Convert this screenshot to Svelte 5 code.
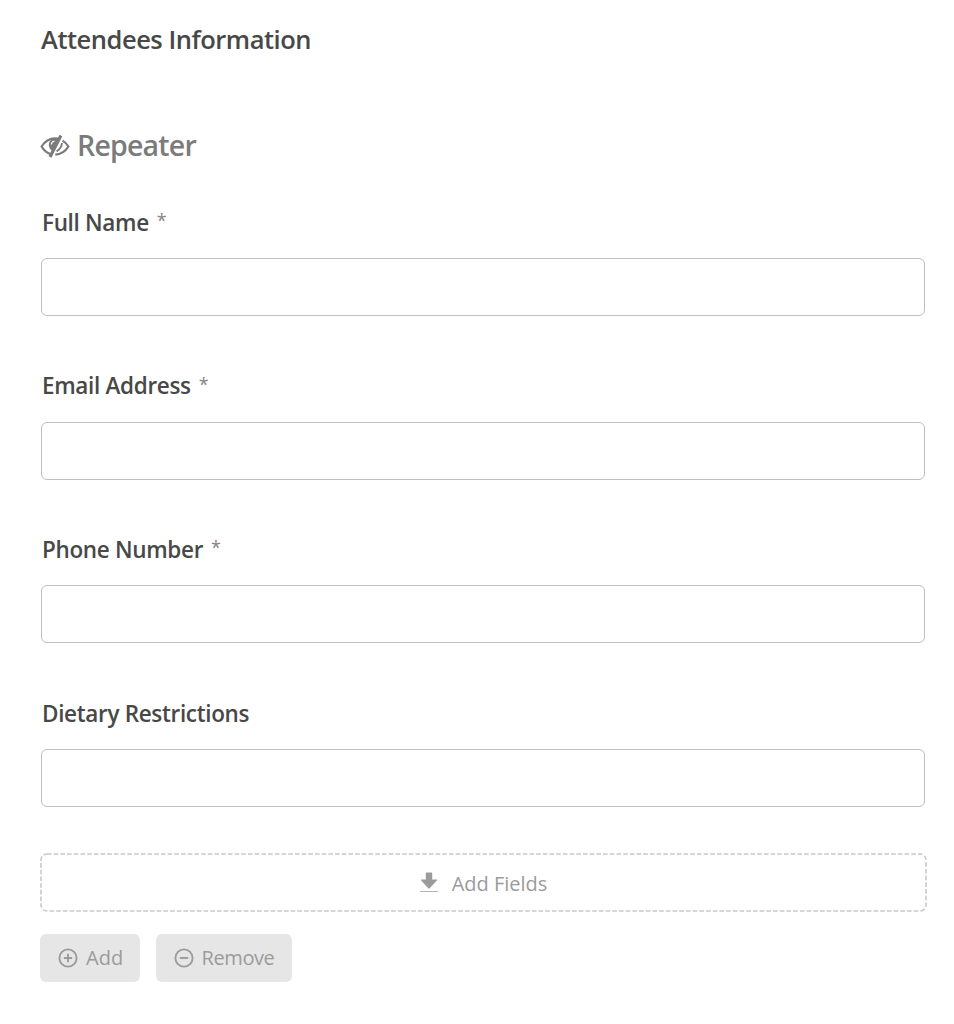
<script lang="ts">
interface Field {
	id: string;
	label: string;
	required: boolean;
}

const fields: Field[] = [
	{ id: 'full-name', label: 'Full Name', required: true },
	{ id: 'email', label: 'Email Address', required: true },
	{ id: 'phone', label: 'Phone Number', required: true },
	{ id: 'dietary', label: 'Dietary Restrictions', required: false }
];
</script>

<main class="form-preview">
	<h2 class="section-title">Attendees Information</h2>

	<!-- Repeater heading, its label is hidden on the live form -->
	<div class="repeater-title">
		<svg class="eye-icon" width="30" height="24" viewBox="0 0 30 24" fill="none" aria-hidden="true">
			<path d="M10.900 20.200C6.800 18.900 3.700 16.200 1.600 12.500 4.600 7.600 9.300 4.300 15 4.300c1.500 0 2.900.2 4.200.6" stroke="currentColor" stroke-width="2.200" />
			<path d="M15.300 20.700c5.600-.4 10.200-3.500 13.100-8.200-1.500-2.600-3.400-4.500-5.800-5.900" stroke="currentColor" stroke-width="2.200" />
			<path d="M19.500 4.600C13.100 3.200 8.800 6.400 8.800 10.800c0 2.900 1.400 5.100 3.800 6.400Z" fill="currentColor" />
			<path d="M11.300 10.500c.2-2 1.500-3.200 3.300-3.500" stroke="#fff" stroke-width="1.200" />
			<path d="M20.900 1.500 10 23" stroke="currentColor" stroke-width="3.200" />
			<path d="M22 9c-.3 3.400-2.200 6.300-5.400 8.400" stroke="currentColor" stroke-width="1.900" />
		</svg>
		<span>Repeater</span>
	</div>

	{#each fields as field (field.id)}
		<div class="field">
			<label for={field.id}>
				<span class="label-text">{field.label}</span>
				{#if field.required}<span class="required">*</span>{/if}
			</label>
			<input id={field.id} type="text" />
		</div>
	{/each}

	<button type="button" class="add-fields">
		<svg class="dashed-frame" aria-hidden="true">
			<rect x="1" y="1" rx="6" />
		</svg>
		<svg width="18" height="22" viewBox="0 0 18 22" aria-hidden="true">
			<path d="M5.800 1.300Q5.800.600 6.500.600h5q.7 0 .7.700V7.600h4.500q.9 0 .3.700l-7.300 8q-.7.700-1.400 0L1 8.300Q.4 7.600 1.300 7.600h4.500Z" fill="currentColor" />
			<path d="M0 19.500h18" stroke="currentColor" stroke-width="1" opacity="0.75" />
		</svg>
		<span>Add Fields</span>
	</button>

	<div class="actions">
		<button type="button" class="action add">
			<svg width="20" height="20" viewBox="0 0 20 20" fill="none" stroke="currentColor" stroke-width="1.900" aria-hidden="true">
				<circle cx="10" cy="10" r="8.600" />
				<path d="M5.800 10h8.400M10 5.800v8.400" />
			</svg>
			<span>Add</span>
		</button>
		<button type="button" class="action remove">
			<svg width="20" height="20" viewBox="0 0 20 20" fill="none" stroke="currentColor" stroke-width="1.900" aria-hidden="true">
				<circle cx="10" cy="10" r="8.600" />
				<path d="M5.800 10h8.400" />
			</svg>
			<span>Remove</span>
		</button>
	</div>
</main>

<style>
:global(body) {
	background: #fff;
}

.form-preview {
	box-sizing: border-box;
	height: 1024px;
	padding: 19px 27px 0 40px;
	overflow: hidden;
	color: #484848;
	font-family: 'Open Sans', 'Noto Sans', sans-serif;
}

.section-title {
	margin: 0;
	padding-left: 1px;
	font-size: 25.5px;
	font-weight: 600;
	line-height: 40px;
	letter-spacing: -0.48px;
}

.repeater-title {
	display: flex;
	align-items: center;
	gap: 7px;
	height: 40px;
	margin: 66px 0 35px;
	color: #7b7b7b;
	font-size: 28.5px;
	font-weight: 600;
	letter-spacing: -0.8px;
}

.eye-icon {
	margin-top: 1px;
}

.field {
	display: flex;
	flex-direction: column;
	height: 163.700px;
	padding: 0 2px 0 1px;
}

label {
	display: flex;
	align-items: center;
	gap: 8px;
	height: 44px;
	padding-left: 1px;
	margin-bottom: 14px;
}

.label-text {
	font-size: 22.5px;
	font-weight: 600;
	letter-spacing: -0.33px;
}

.required {
	margin-top: -4px;
	color: #8a8080;
	font-size: 18px;
}

input {
	box-sizing: border-box;
	width: 100%;
	height: 58px;
	border: 1px solid #bebebe;
	border-radius: 6px;
	background: #fff;
	outline: none;
}

button {
	font-family: inherit;
	color: #9b9b9b;
	cursor: pointer;
}

.add-fields {
	position: relative;
	box-sizing: border-box;
	display: flex;
	align-items: center;
	justify-content: center;
	gap: 14px;
	width: 100%;
	height: 59px;
	margin-top: -2px;
	padding: 2px 0 0;
	border: 0;
	background: #fff;
	font-size: 20px;
}

/* Finer dashes than a dashed border gives */
.dashed-frame {
	position: absolute;
	inset: 0;
	width: 100%;
	height: 100%;
}

.dashed-frame rect {
	width: calc(100% - 2px);
	height: calc(100% - 2px);
	fill: none;
	stroke: #c9c9c9;
	stroke-width: 1.6;
	stroke-dasharray: 4.6 2.1;
}

.actions {
	display: flex;
	gap: 16px;
	margin-top: 22px;
}

.action {
	display: flex;
	align-items: center;
	gap: 8px;
	height: 48px;
	padding: 0 0 0 18px;
	border: 0;
	border-radius: 6px;
	background: #e6e6e6;
	font-size: 20px;
}

.add {
	width: 100px;
}

.remove {
	width: 136px;
	padding-left: 17.500px;
	letter-spacing: -0.4px;
}
</style>
